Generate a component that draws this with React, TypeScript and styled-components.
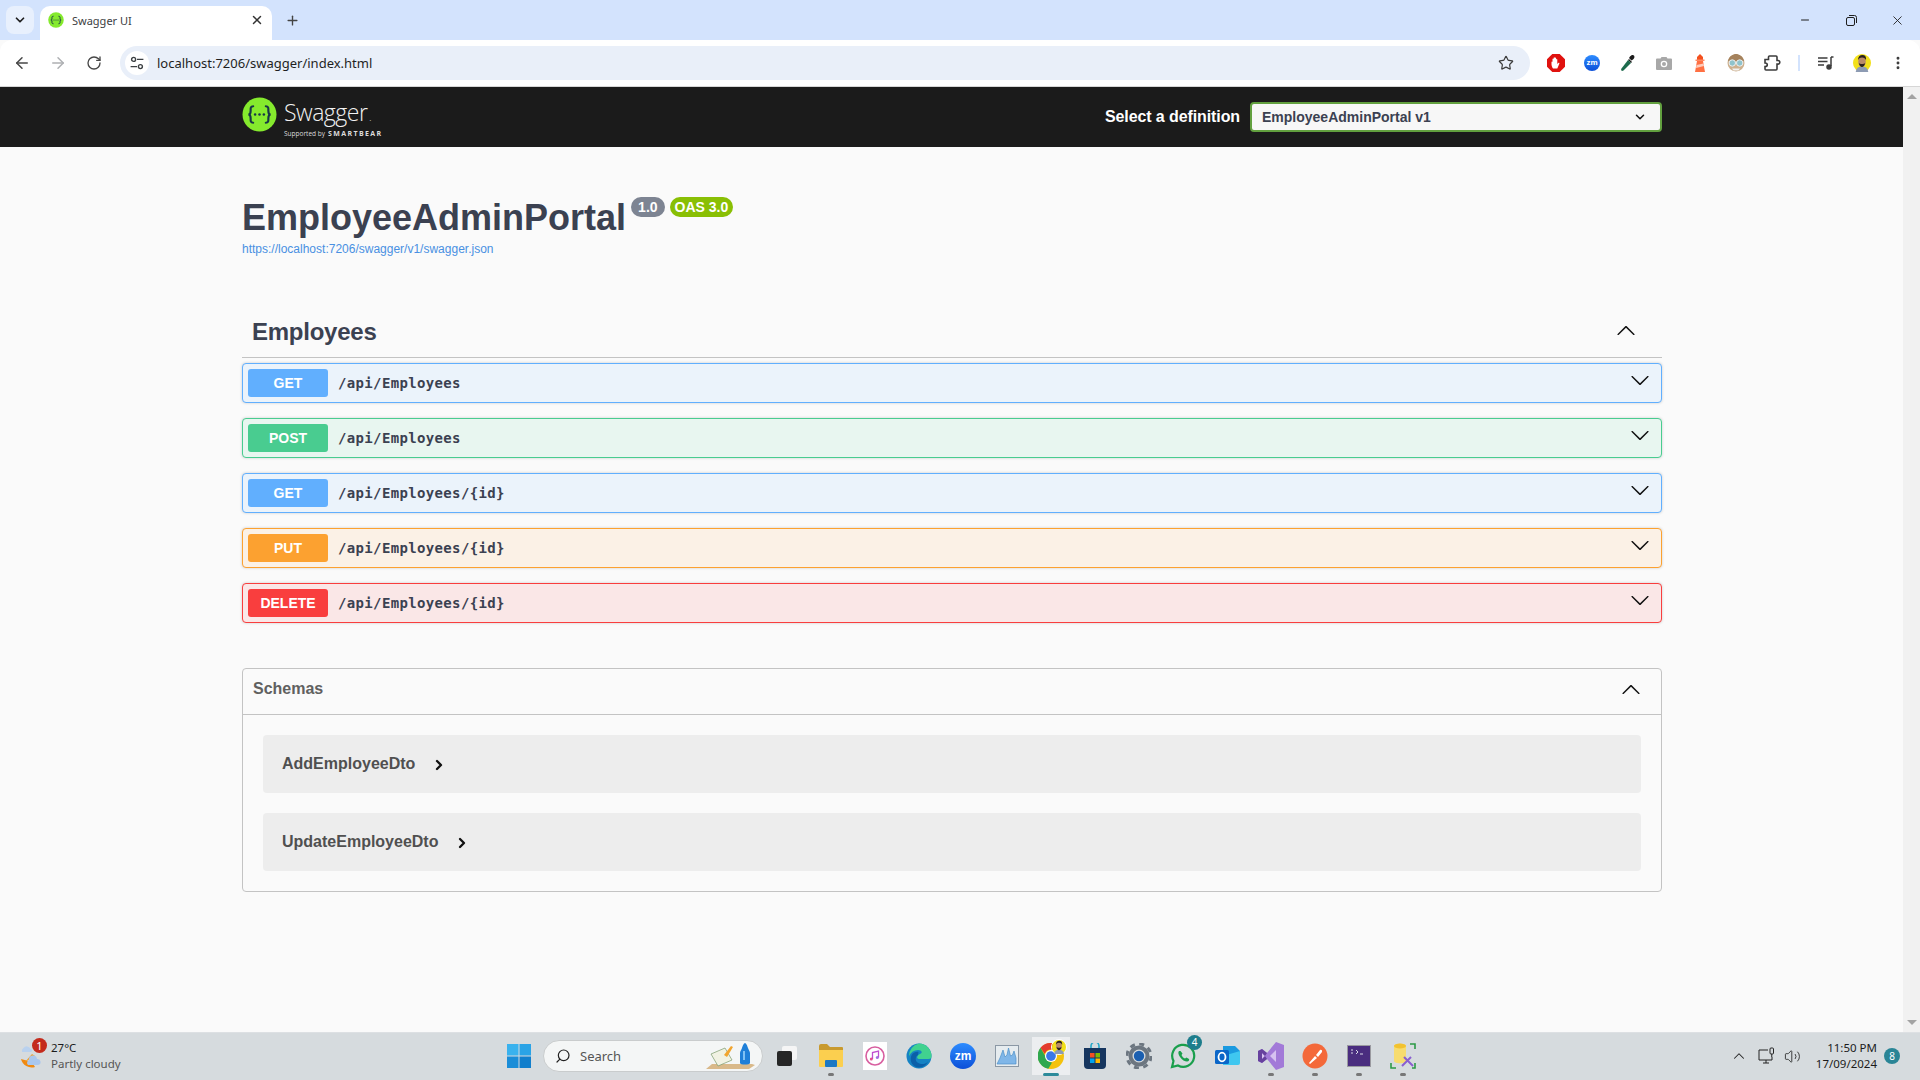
import React from "react";
import styled, { createGlobalStyle } from "styled-components";
import { ArrowLeft, ArrowRight, RotateCw, Star, X, Plus, ChevronDown, ChevronRight, ChevronUp, Minus, EllipsisVertical, Search as SearchIcon, Volume2 } from "lucide-react";

const Global = createGlobalStyle`
  html, body { margin: 0; padding: 0; width: 100%; height: 100%; overflow: hidden; }
  #root { width: 1920px; height: 1080px; }
  * { box-sizing: border-box; }
`;

const Screen = styled.div`
  width: 1920px; height: 1080px; display: flex; flex-direction: column; overflow: hidden;
  font-family: "Liberation Sans", Arial, sans-serif; background: #fafafa;
`;

/* ---------- browser chrome ---------- */
const TabStrip = styled.div`
  height: 40px; background: #d3e3fd; display: flex; align-items: flex-end; padding-left: 6px; flex: none;
`;
const TabMenu = styled.div`
  width: 28px; height: 28px; margin-bottom: 6px; border-radius: 8px; background: #e8f0fd;
  display: flex; align-items: center; justify-content: center; color: #1f1f1f;
`;
const Tab = styled.div`
  width: 232px; height: 34px; margin-left: 6px; background: #fff; border-radius: 10px 10px 0 0;
  display: flex; align-items: center; padding: 0 8px; gap: 8px; padding-bottom: 6px;
`;
const TabTitle = styled.span`
  flex: 1; font: 11px "Noto Sans", sans-serif; color: #3c4043;
`;
const NewTab = styled.div`
  width: 40px; height: 40px; display: flex; align-items: center; justify-content: center; color: #444;
`;
const WindowControls = styled.div`
  margin-left: auto; height: 40px; display: flex; color: #1f1f1f;
`;
const WindowButton = styled.div`
  width: 46px; height: 40px; display: flex; align-items: center; justify-content: center;
`;
const Toolbar = styled.div`
  height: 47px; flex: none; background: #fff; border-bottom: 1px solid #d6d6d6; display: flex; align-items: center; padding-left: 4px;
  border-radius: 12px 12px 0 0;
`;
const NavButton = styled.div<{ $dim?: boolean }>`
  width: 36px; height: 36px; display: flex; align-items: center; justify-content: center;
  color: ${(p) => (p.$dim ? "#aeb0b3" : "#474747")};
`;
const AddressBar = styled.div`
  width: 1410px; height: 34px; margin-left: 8px; background: #e9eff9; border-radius: 17px;
  display: flex; align-items: center; padding: 0 6px 0 5px;
`;
const SiteInfo = styled.div`
  width: 24px; height: 24px; border-radius: 50%; background: #fff; display: flex; align-items: center; justify-content: center; flex: none;
`;
const UrlText = styled.span`
  flex: 1; margin-left: 8px; font: 13px "Noto Sans", sans-serif; color: #1f1f1f;
`;
const ExtensionRow = styled.div`
  display: flex; align-items: center; margin-left: 8px; height: 36px;
`;
const ExtensionCell = styled.div<{ $w?: number }>`
  width: ${(p) => p.$w ?? 36}px; height: 36px; display: flex; align-items: center; justify-content: center; flex: none;
`;
const ToolbarDivider = styled.div`
  width: 2px; height: 16px; background: #d3e3fd; margin: 0 16px 0 8px;
`;

/* ---------- page ---------- */
const Viewport = styled.div`
  flex: 1; min-height: 0; display: flex;
`;
const Page = styled.div`
  flex: 1; min-width: 0; background: #fafafa; display: flex; flex-direction: column;
`;
const Scrollbar = styled.div`
  width: 17px; background: #f1f1f1; display: flex; flex-direction: column; justify-content: space-between; align-items: center; padding: 7px 0;
`;
const ScrollArrow = styled.div<{ $down?: boolean }>`
  width: 0; height: 0; border-left: 5px solid transparent; border-right: 5px solid transparent;
  ${(p) => (p.$down ? "border-top: 5px solid #a3a3a3;" : "border-bottom: 5px solid #a3a3a3;")}
`;
const TopBar = styled.div`
  height: 60px; flex: none; background: #1b1b1b; display: flex; align-items: center; padding: 0 241px 0 242px;
`;
const Logo = styled.div`
  display: flex; align-items: flex-start; gap: 7px; color: #fff; height: 35px; margin-top: -5px;
`;
const LogoWords = styled.div`
  display: flex; flex-direction: column; margin-top: 2px;
`;
const LogoName = styled.span`
  font: 300 23px/26px "Open Sans", sans-serif; letter-spacing: -0.5px; color: #f2f2f2;
`;
const LogoDot = styled.span`
  font-size: 9px; letter-spacing: 0; margin-left: 2px;
`;
const LogoSub = styled.span`
  margin-top: -1px; font: 6.5px/8px "Open Sans", sans-serif; color: #ddd; white-space: nowrap;
`;
const LogoBrand = styled.b`
  font: 700 7px/8px "Open Sans", sans-serif; letter-spacing: 1.4px; margin-left: 3px;
`;
const DefinitionForm = styled.div`
  margin-left: auto; display: flex; align-items: center; gap: 10px;
`;
const DefinitionLabel = styled.span`
  font: 700 16px "Liberation Sans", sans-serif; color: #fff; margin-top: -1px; letter-spacing: -0.1px;
`;
const DefinitionSelect = styled.div`
  width: 412px; height: 30px; border: 2px solid #62a03f; border-radius: 4px; background: #f7f7f7;
  display: flex; align-items: center; justify-content: space-between; padding: 0 13px 0 10px;
  font: 700 14px "Liberation Sans", sans-serif; color: #3b4151;
`;
const Wrapper = styled.div`
  width: 1420px; margin-left: 242px; display: flex; flex-direction: column;
`;
const Info = styled.div`
  margin-top: 50px; height: 90px; display: flex; flex-direction: column;
`;
const TitleRow = styled.div`
  display: flex; align-items: flex-start; height: 41px;
`;
const Title = styled.h2`
  margin: 0; font: 700 36px/41px "Liberation Sans", sans-serif; color: #3b4151;
`;
const Pill = styled.span<{ $bg: string; $px: number }>`
  height: 20px; margin-left: 5px; padding: 0 ${(p) => p.$px}px; border-radius: 10px; background: ${(p) => p.$bg};
  color: #fff; font: 700 14px/20px "Liberation Sans", sans-serif;
`;
const SpecLink = styled.a`
  margin-top: 4px; font: 12px/14px "Liberation Sans", sans-serif; color: #4990e2;
`;
const SectionHead = styled.div`
  height: 51px; margin-top: 20px; border-bottom: 1px solid #c3c3c3; display: flex; align-items: center; justify-content: space-between; padding: 0 26px 0 10px;
`;
const SectionTitle = styled.h3`
  margin: 0; font: 700 24px "Liberation Sans", sans-serif; color: #3b4151; letter-spacing: -0.25px;
`;
const Ops = styled.div`
  display: flex; flex-direction: column; gap: 15px; margin-top: 5px;
`;
const Op = styled.div<{ $c: string; $bg: string }>`
  height: 40px; border: 1px solid ${(p) => p.$c}; background: ${(p) => p.$bg}; border-radius: 4px;
  box-shadow: 0 0 3px rgba(0, 0, 0, 0.19); display: flex; align-items: center; padding: 0 11px 0 5px;
`;
const Method = styled.span<{ $c: string }>`
  width: 80px; height: 28px; background: ${(p) => p.$c}; border-radius: 3px; color: #fff; text-align: center;
  font: 700 14px/28px "Liberation Sans", sans-serif; flex: none;
`;
const OpPath = styled.span`
  flex: 1; margin-left: 10px; font: 600 14px "DejaVu Sans Mono", monospace; color: #3b4151; letter-spacing: 0.35px;
`;
const ArrowSvg = styled.svg<{ $up?: boolean; $shift: number }>`
  width: 20px; height: 20px; flex: none; fill: #111; margin-top: ${(p) => p.$shift}px;
  ${(p) => p.$up && "transform: rotate(180deg);"}
`;
const SchemaBox = styled.section`
  margin-top: 45px; height: 224px; border: 1px solid #c3c3c3; border-radius: 4px; display: flex; flex-direction: column;
`;
const SchemaHead = styled.div`
  height: 46px; flex: none; border-bottom: 1px solid #c3c3c3; display: flex; align-items: center; justify-content: space-between;
  padding: 0 20px 0 10px;
`;
const SchemaTitle = styled.span`
  font: 700 16px "Liberation Sans", sans-serif; color: #606060; margin-top: -5px;
`;
const SchemaList = styled.div`
  padding: 20px; display: flex; flex-direction: column; gap: 20px;
`;
const Model = styled.div`
  height: 58px; background: #ededed; border-radius: 4px; display: flex; align-items: center; padding-left: 19px; gap: 16px;
  color: #111;
`;
const ModelName = styled.span`
  font: 700 16px "Liberation Sans", sans-serif; color: #505050; margin-top: -1px;
`;
const ModelCaret = styled(ChevronRight)`
  margin-top: 2px;
`;

/* ---------- taskbar ---------- */
const Taskbar = styled.div`
  height: 48px; flex: none; background: #d6dbde; border-top: 1px solid #dde0e3; padding-bottom: 1px; display: flex; align-items: center;
`;
const Weather = styled.div`
  width: 497px; flex: none; display: flex; align-items: center; padding-left: 20px; gap: 7px; position: relative;
`;
const WeatherBadge = styled.span`
  position: absolute; left: 32px; top: -2px; width: 15px; height: 15px; border-radius: 50%; background: #c42b1c; color: #fff;
  font: 11px/15px "Noto Sans", sans-serif; text-align: center;
`;
const WeatherText = styled.div`
  display: flex; flex-direction: column; font: 11.5px/16px "Noto Sans", sans-serif; color: #1b1b1b;
`;
const WeatherSub = styled.span`
  color: #555;
`;
const Cell = styled.div<{ $active?: boolean }>`
  width: 44px; height: 44px; flex: none; display: flex; align-items: center; justify-content: center; position: relative;
  ${(p) => p.$active && "background: linear-gradient(#eceef0, #eceef0) center / 38px 38px no-repeat;"}
`;
const RunDot = styled.span<{ $active?: boolean }>`
  position: absolute; bottom: 2px; left: 50%; transform: translateX(-50%); height: 3px; border-radius: 2px;
  width: ${(p) => (p.$active ? 16 : 6)}px; background: ${(p) => (p.$active ? "#2c8a9a" : "#777")};
`;
const SearchBox = styled.div`
  width: 220px; height: 32px; margin: 0 2px; background: #f4f6f6; border: 1px solid #c9cccd; border-radius: 16px; display: flex; align-items: center; padding-left: 11px; gap: 9px;
  font: 13px "Noto Sans", sans-serif; color: #555; flex: none;
`;
const SearchArt = styled.div`
  margin-left: auto; margin-right: 7px; display: flex;
`;
const Tray = styled.div`
  margin-left: auto; display: flex; align-items: center; padding-right: 20px; color: #222;
`;
const TrayIcon = styled.div<{ $w: number }>`
  width: ${(p) => p.$w}px; display: flex; justify-content: center;
`;
const Clock = styled.div`
  margin-left: 12px; display: flex; flex-direction: column; align-items: flex-end; font: 11.5px/16px "Noto Sans", sans-serif; color: #1b1b1b;
`;
const NotifyBadge = styled.span`
  margin-left: 7px; width: 16px; height: 16px; border-radius: 50%; background: #2a8596; color: #fff; font: 10px/16px "Noto Sans", sans-serif; text-align: center;
`;
const CountBadge = styled.span`
  position: absolute; top: 1px; right: 3px; width: 15px; height: 15px; border-radius: 50%; background: #1d7d8c; color: #fff;
  font: 10px/15px "Noto Sans", sans-serif; text-align: center;
`;
const AvatarBadge = styled.span`
  position: absolute; top: 5px; right: 6px; display: flex; border-radius: 50%; border: 1px solid #fff;
`;
const ZmDisc = styled.span<{ $size: number; $fs: number }>`
  width: ${(p) => p.$size}px; height: ${(p) => p.$size}px; border-radius: 50%; background: linear-gradient(#2d8cff, #0b4fd8);
  color: #fff; text-align: center; font: 700 ${(p) => p.$fs}px/${(p) => p.$size}px "Liberation Sans", sans-serif; display: block;
`;

/* ---------- drawings ---------- */
const Arrow = ({ up, shift }: { up?: boolean; shift: number }) => (
  <ArrowSvg viewBox="0 0 20 20" $up={up} $shift={shift}>
    <path d="M17.418 6.109c.272-.268.709-.268.979 0s.271.701 0 .969l-7.908 7.83c-.27.268-.707.268-.979 0l-7.908-7.83c-.27-.268-.27-.701 0-.969.271-.268.709-.268.979 0L10 13.25l7.418-7.141z" />
  </ArrowSvg>
);
const SwaggerMark = ({ size }: { size: number }) => (
  <svg width={size} height={size} viewBox="0 0 36 36">
    <circle cx="18" cy="18" r="17.5" fill="#85ea2d" />
    <g fill="none" stroke="#173647" strokeWidth="2.2" strokeLinecap="round">
      <path d="M11.5 9.5c-3 0-2.6 2.2-2.6 4.6 0 2.4-.6 3.9-2.4 3.9 1.8 0 2.4 1.5 2.4 3.9s-.4 4.6 2.6 4.6" />
      <path d="M24.5 9.5c3 0 2.6 2.2 2.6 4.6 0 2.4.6 3.9 2.4 3.9-1.8 0-2.4 1.5-2.4 3.9s.4 4.6-2.6 4.6" />
    </g>
    <g fill="#173647"><circle cx="13.5" cy="18" r="1.3" /><circle cx="18" cy="18" r="1.3" /><circle cx="22.5" cy="18" r="1.3" /></g>
  </svg>
);
const Tune = () => (
  <svg width="14" height="14" viewBox="0 0 14 14" fill="none" stroke="#3c4043" strokeWidth="1.4">
    <circle cx="3.6" cy="3.4" r="2" /><path d="M7 3.4h6.4M0.6 10.6h6.4" /><circle cx="10.4" cy="10.6" r="2" />
  </svg>
);
const Avatar = ({ size }: { size: number }) => (
  <svg width={size} height={size} viewBox="0 0 20 20">
    <circle cx="10" cy="10" r="10" fill="#f2e01a" />
    <path d="M3 20c.5-4 3-6 7-6s6.500 2 7 6z" fill="#8d9bb3" />
    <ellipse cx="10" cy="8.500" rx="4.200" ry="5.500" fill="#b98a68" />
    <path d="M5.500 7c0-4 2-6 5-6s4.500 2 4 6c-1-2-2-3-4.500-3S6.500 5 5.500 7z" fill="#2a211c" />
    <path d="M6.500 10c.5 3 2 4.500 3.500 4.500s3-1.500 3.500-4.500c-1 1.500-6 1.500-7 0z" fill="#2a211c" />
  </svg>
);
const ChromeMark = () => (
  <svg width="26" height="26" viewBox="0 0 24 24">
    <circle cx="12" cy="12" r="12" fill="#f4c20d" />
    <path d="M12 0a12 12 0 0 1 10.400 6H12a6 6 0 0 0-5.700 4.100L2.300 4.400A12 12 0 0 1 12 0z" fill="#e33b2e" />
    <path d="M2.300 4.400l5.300 9.300a5 5 0 0 0 5.400 4.200L9.500 23.800A12 12 0 0 1 2.300 4.400z" fill="#2fa84f" />
    <circle cx="12" cy="12" r="5.600" fill="#fff" /><circle cx="12" cy="12" r="4.500" fill="#3b78e7" />
  </svg>
);
const Icon = {
  Stop: () => (
    <svg width="18" height="18" viewBox="0 0 18 18">
      <path d="M5.300 0h7.400L18 5.300v7.400L12.700 18H5.300L0 12.700V5.300z" fill="#e0120f" />
      <path d="M6 14.500c-1-1.500-1.500-3-1.500-4V8c0-.8 1-.8 1 0V5c0-.8 1.200-.8 1.200 0V3.800c0-.8 1.200-.8 1.200 0V4c0-.8 1.200-.8 1.200 0v1.500c0-.8 1.200-.8 1.200 0V10l1-1c.6-.6 1.400 0 1 .7l-2 4.800z" fill="#fff" />
    </svg>
  ),
  Dropper: () => (
    <svg width="18" height="18" viewBox="0 0 18 18">
      <path d="M11 2.500c1.200-1.800 3.200-2 4-1s.6 2.800-1 4l-1.500 1-2.500-2.500z" fill="#1c1c1c" />
      <path d="M10 5l3 3-1 1-3-3z" fill="#1c1c1c" />
      <path d="M9 6l3 3-7.500 7.500-1.500.5-1-1 .5-1.500z" fill="#1d6b4d" />
    </svg>
  ),
  Camera: () => (
    <svg width="16" height="14" viewBox="0 0 16 14">
      <path d="M1 2.500h3.500L5.500 1h5l1 1.500H15a1 1 0 0 1 1 1V13a1 1 0 0 1-1 1H1a1 1 0 0 1-1-1V3.500a1 1 0 0 1 1-1z" fill="#a8a8a8" />
      <circle cx="8" cy="8" r="3.300" fill="#fff" /><circle cx="8" cy="8" r="2" fill="#a8a8a8" />
    </svg>
  ),
  Lighthouse: () => (
    <svg width="14" height="18" viewBox="0 0 14 18">
      <path d="M7 0l3 3v3H4V3z" fill="#f4511e" /><rect x="2.500" y="5.500" width="9" height="1.500" fill="#ff8a65" />
      <path d="M4 7h6l2 11H2z" fill="#ff7043" /><path d="M3.500 11l7-1.500.5 2.500-8 2z" fill="#ffccbc" />
    </svg>
  ),
  Goggles: () => (
    <svg width="18" height="18" viewBox="0 0 18 18">
      <circle cx="9" cy="9" r="8.500" fill="#cdb08e" /><path d="M1 7c1-5 5-7 8-7s7 2 8 7z" fill="#a5825c" />
      <circle cx="5.300" cy="9" r="3.200" fill="#8fc3cc" stroke="#eee" /><circle cx="12.700" cy="9" r="3.200" fill="#8fc3cc" stroke="#eee" />
      <path d="M5 14.500h8l-1.500 2h-5z" fill="#f1f1f1" />
    </svg>
  ),
  Puzzle: () => (
    <svg width="18" height="18" viewBox="0 0 18 18" fill="none" stroke="#3c3c3c" strokeWidth="1.600">
      <path d="M2 5.500h3.500V3c0-.8.500-1 1-1h6.500a1 1 0 0 1 1 1v3.500h1a1.700 1.700 0 0 1 0 3.600h-1V15a1 1 0 0 1-1 1H3a1 1 0 0 1-1-1v-2.500c1.500 0 2.300-.8 2.300-1.800S3.500 9 2 9z" />
    </svg>
  ),
  Media: () => (
    <svg width="16" height="16" viewBox="0 0 16 16" fill="none" stroke="#3c3c3c" strokeWidth="1.500">
      <path d="M0 3h9.500M0 6.500h9.500M0 10h6" /><path d="M13 2v9" /><path d="M13 2h2.500" /><circle cx="11" cy="12" r="2" fill="#3c3c3c" />
    </svg>
  ),
  Restore: () => (
    <svg width="11" height="11" viewBox="0 0 11 11" fill="none" stroke="#1f1f1f">
      <rect x="0.500" y="2.500" width="8" height="8" rx="1.500" /><path d="M3 .5h5.500a2 2 0 0 1 2 2V8" />
    </svg>
  ),
  Weather: () => (
    <svg width="24" height="26" viewBox="0 0 24 26">
      <path d="M2 9a3.500 3.500 0 0 1 1.500-4 4 4 0 0 1 7 1c2 0 2 3 0 3z" fill="#b9d1ee" />
      <path d="M1 16a11 11 0 0 0 14 8l-3-5z" fill="#f08a12" /><path d="M5 19l7-8 3 2z" fill="#f0a030" />
      <path d="M8 22a3 3 0 0 1 1-5 4 4 0 0 1 8-1 3 3 0 0 1 1 6z" fill="#a9c7ee" />
    </svg>
  ),
  Start: () => (
    <svg width="24" height="24" viewBox="0 0 24 24">
      <rect x="0" y="0" width="11.500" height="11.500" fill="#39b2ee" /><rect x="12.500" y="0" width="11.500" height="11.500" fill="#2aa3e6" />
      <rect x="0" y="12.500" width="11.500" height="11.500" fill="#1a8dd8" /><rect x="12.500" y="12.500" width="11.500" height="11.500" fill="#127fcc" />
    </svg>
  ),
  Book: () => (
    <svg width="49" height="26" viewBox="0 0 49 26">
      <path d="M6 21h40l3 1-6 4H0z" fill="#d9b98a" />
      <path d="M5 11l14-6 7 12-14 6z" fill="#f1f2e3" stroke="#7a9a6a" strokeWidth=".7" />
      <path d="M18 12l7-9 2 1-6 10z" fill="#f2a52e" />
      <path d="M34 10c0-2 1.500-3 2-5s2-5 3-5 2.500 3 3 5 2 3 2 5v10c0 2-10 2-10 0z" fill="#1f7fd8" />
      <path d="M37 8h2v9h-2z" fill="#7fc1f4" />
    </svg>
  ),
  TaskView: () => (
    <svg width="22" height="22" viewBox="0 0 22 22">
      <rect x="6" y="1" width="15" height="14" rx="2" fill="#f5f5f5" /><rect x="1" y="6" width="15" height="15" rx="2" fill="#262626" />
    </svg>
  ),
  Folder: () => (
    <svg width="26" height="26" viewBox="0 0 26 26">
      <path d="M1 3a2 2 0 0 1 2-2h6l3 3h12a1 1 0 0 1 1 1v3H1z" fill="#c99a2e" />
      <path d="M1 7h24v16a1 1 0 0 1-1 1H2a1 1 0 0 1-1-1z" fill="#fbcf4f" /><rect x="7" y="17" width="12" height="7" rx="1" fill="#1c78c4" />
    </svg>
  ),
  ITunes: () => (
    <svg width="24" height="28" viewBox="0 0 24 28">
      <rect width="24" height="28" fill="#fff" /><circle cx="12" cy="14" r="9" fill="none" stroke="#d85fa0" strokeWidth="1.600" />
      <path d="M9.500 17V10.500l6-1.500v6.500" fill="none" stroke="#c04fd0" strokeWidth="1.300" /><circle cx="8.300" cy="17" r="1.500" fill="#e0508f" /><circle cx="14.300" cy="15.500" r="1.500" fill="#a070e0" />
    </svg>
  ),
  Edge: () => (
    <svg width="26" height="26" viewBox="0 0 26 26">
      <circle cx="13" cy="13" r="12.500" fill="#1583c4" />
      <path d="M13 .5A12.500 12.500 0 0 1 25.500 13c0 2-.5 3-3 3H13c-3 0-2-4 1-5 3-1 2-4-2-4-4 0-7 2-9 6A12.500 12.500 0 0 1 13 .5z" fill="#41d28f" />
      <path d="M12 12c-3 1-4 8 3 9 3 .3 5-.500 7-2.500-3 6-9 7-13 5-5-3-5-9-3-12 1.500-2 4-3 6.500-2.500z" fill="#0b5fa8" />
    </svg>
  ),
  Monitor: () => (
    <svg width="24" height="22" viewBox="0 0 24 22">
      <rect x=".5" y=".5" width="23" height="21" fill="#e6ecef" stroke="#8b98a5" />
      <path d="M2 19l3-6 3-8 2 7 2-2 1.500-7 2 8 2-1 1.500-4 2 7v6z" fill="#7fb6e8" stroke="#4d90c8" strokeWidth=".7" />
    </svg>
  ),
  Store: () => (
    <svg width="24" height="26" viewBox="0 0 24 26">
      <path d="M8 5V3a4 4 0 0 1 8 0v2" fill="none" stroke="#28a9c9" strokeWidth="1.600" />
      <path d="M1 5h22v17a4 4 0 0 1-4 4H5a4 4 0 0 1-4-4z" fill="#16365f" />
      <rect x="7" y="10" width="4.500" height="4.500" fill="#f25022" /><rect x="12.500" y="10" width="4.500" height="4.500" fill="#7fba00" />
      <rect x="7" y="15.500" width="4.500" height="4.500" fill="#00a4ef" /><rect x="12.500" y="15.500" width="4.500" height="4.500" fill="#ffb900" />
    </svg>
  ),
  Gear: () => (
    <svg width="26" height="26" viewBox="0 0 26 26">
      <circle cx="13" cy="13" r="8.500" fill="none" stroke="#6c7680" strokeWidth="4" />
      <circle cx="13" cy="13" r="12" fill="none" stroke="#6c7680" strokeWidth="3" strokeDasharray="5 4.400" />
      <circle cx="13" cy="13" r="5.200" fill="#1b5fb0" />
    </svg>
  ),
  WhatsApp: () => (
    <svg width="26" height="26" viewBox="0 0 26 26">
      <path d="M2 24l1.500-6A11 11 0 1 1 8 22.500z" fill="none" stroke="#1a9f4c" strokeWidth="2.200" />
      <path d="M9 8c-1 1-1 3 1 6s5 4.500 7 4.500 2.500-2 2-2.500l-2.500-1.500-1.500 1c-1.500-.5-3-2-3.500-3.500l1-1.500L10.500 8z" fill="#1a9f4c" />
    </svg>
  ),
  Outlook: () => (
    <svg width="26" height="26" viewBox="0 0 26 26">
      <path d="M9 3h12l5 5v12H9z" fill="#1a9ae0" /><path d="M9 13l17-5v12a2 2 0 0 1-2 2H9z" fill="#3fc7f0" />
      <rect x="1" y="7" width="14" height="14" rx="1.500" fill="#0a66c8" /><ellipse cx="8" cy="14" rx="3.500" ry="4.300" fill="none" stroke="#fff" strokeWidth="1.800" />
    </svg>
  ),
  VS: () => (
    <svg width="26" height="28" viewBox="0 0 26 28">
      <path d="M18 0l8 3v22l-8 3-9-11-5 4-4-2V9l4-2 5 4z" fill="#a27ad8" /><path d="M18 8l-6 6 6 6z" fill="#d6c2f0" /><path d="M4 11v6l3-3z" fill="#d6c2f0" />
      <path d="M0 9l4-2 5 4-2 3-3-3v6l3-3 2 3-5 4-4-2z" fill="#66419e" />
    </svg>
  ),
  Postman: () => (
    <svg width="26" height="26" viewBox="0 0 26 26">
      <circle cx="13" cy="13" r="12.500" fill="#f4693a" />
      <path d="M7 20l6-7 2 2-7 6zM14 12l4-5c1.500-.5 2.500.5 2 2l-4 5z" fill="#fff" />
    </svg>
  ),
  Terminal: () => (
    <svg width="24" height="22" viewBox="0 0 24 22">
      <rect x=".5" y=".5" width="23" height="21" fill="#4a2d7f" stroke="#9a9aa0" />
      <path d="M4 5h2M4 8h2M9 5l2 2-2 2M13 9h3" stroke="#d8d8e6" strokeWidth="1" fill="none" />
    </svg>
  ),
  DbTools: () => (
    <svg width="26" height="26" viewBox="0 0 26 26">
      <path d="M4 3c0-3 12-3 12 0v15c0 3-12 3-12 0z" fill="#f7dc6f" /><ellipse cx="10" cy="3" rx="6" ry="2.500" fill="#f2c230" />
      <path d="M12 23l9-9M14 14l9 9" stroke="#8a5fd0" strokeWidth="2" /><path d="M1 20v5h5M20 1h5v5M25 20v5h-3" fill="none" stroke="#2c9a46" strokeWidth="1.600" />
    </svg>
  ),
  Network: () => (
    <svg width="18" height="18" viewBox="0 0 18 18" fill="none" stroke="#222" strokeWidth="1">
      <path d="M10 3H1v10h13v-3" /><path d="M5 16h6M8 13v3" /><rect x="12" y="1" width="3.500" height="6" rx="1" /><path d="M13.750 7v3" />
    </svg>
  ),
};

const operations = [
  { m: "GET", path: "/api/Employees", c: "#61affe", bg: "#ebf3fb" },
  { m: "POST", path: "/api/Employees", c: "#49cc90", bg: "#e8f6f0" },
  { m: "GET", path: "/api/Employees/{id}", c: "#61affe", bg: "#ebf3fb" },
  { m: "PUT", path: "/api/Employees/{id}", c: "#fca130", bg: "#fbf1e6" },
  { m: "DELETE", path: "/api/Employees/{id}", c: "#f93e3e", bg: "#fae7e7" },
];
const models = ["AddEmployeeDto", "UpdateEmployeeDto"];

const apps: { node: React.ReactNode; dot?: boolean; active?: boolean; badge?: string }[] = [
  { node: <Icon.TaskView /> },
  { node: <Icon.Folder />, dot: true },
  { node: <Icon.ITunes /> },
  { node: <Icon.Edge /> },
  { node: <ZmDisc $size={26} $fs={12}>zm</ZmDisc> },
  { node: <Icon.Monitor /> },
  { node: <ChromeMark />, dot: true, active: true },
  { node: <Icon.Store /> },
  { node: <Icon.Gear /> },
  { node: <Icon.WhatsApp />, badge: "4" },
  { node: <Icon.Outlook /> },
  { node: <Icon.VS />, dot: true },
  { node: <Icon.Postman />, dot: true },
  { node: <Icon.Terminal />, dot: true },
  { node: <Icon.DbTools />, dot: true },
];

export default function App() {
  return (
    <Screen>
      <Global />
      <TabStrip>
        <TabMenu><ChevronDown size={14} strokeWidth={3} /></TabMenu>
        <Tab>
          <SwaggerMark size={16} />
          <TabTitle>Swagger UI</TabTitle>
          <X size={14} strokeWidth={2.5} color="#333" />
        </Tab>
        <NewTab><Plus size={15} strokeWidth={2.2} /></NewTab>
        <WindowControls>
          <WindowButton><Minus size={12} strokeWidth={2} /></WindowButton>
          <WindowButton><Icon.Restore /></WindowButton>
          <WindowButton><X size={15} strokeWidth={1.4} /></WindowButton>
        </WindowControls>
      </TabStrip>
      <Toolbar>
        <NavButton><ArrowLeft size={18} strokeWidth={2} /></NavButton>
        <NavButton $dim><ArrowRight size={18} strokeWidth={2} /></NavButton>
        <NavButton><RotateCw size={16} strokeWidth={2} /></NavButton>
        <AddressBar>
          <SiteInfo><Tune /></SiteInfo>
          <UrlText>localhost:7206/swagger/index.html</UrlText>
          <ExtensionCell $w={36}><Star size={16} strokeWidth={1.8} color="#3c3c3c" /></ExtensionCell>
        </AddressBar>
        <ExtensionRow>
          <ExtensionCell><Icon.Stop /></ExtensionCell>
          <ExtensionCell><ZmDisc $size={16} $fs={8}>zm</ZmDisc></ExtensionCell>
          <ExtensionCell><Icon.Dropper /></ExtensionCell>
          <ExtensionCell><Icon.Camera /></ExtensionCell>
          <ExtensionCell><Icon.Lighthouse /></ExtensionCell>
          <ExtensionCell><Icon.Goggles /></ExtensionCell>
          <ExtensionCell><Icon.Puzzle /></ExtensionCell>
          <ToolbarDivider />
          <ExtensionCell $w={20}><Icon.Media /></ExtensionCell>
          <ExtensionCell $w={52}><Avatar size={18} /></ExtensionCell>
          <ExtensionCell $w={20}><EllipsisVertical size={16} strokeWidth={2.4} color="#3c3c3c" /></ExtensionCell>
        </ExtensionRow>
      </Toolbar>
      <Viewport>
        <Page>
          <TopBar>
            <Logo>
              <SwaggerMark size={35} />
              <LogoWords>
                <LogoName>Swagger<LogoDot>.</LogoDot></LogoName>
                <LogoSub>Supported by<LogoBrand>SMARTBEAR</LogoBrand></LogoSub>
              </LogoWords>
            </Logo>
            <DefinitionForm>
              <DefinitionLabel>Select a definition</DefinitionLabel>
              <DefinitionSelect>
                EmployeeAdminPortal v1
                <ChevronDown size={14} strokeWidth={2.6} color="#111" />
              </DefinitionSelect>
            </DefinitionForm>
          </TopBar>
          <Wrapper>
            <Info>
              <TitleRow>
                <Title>EmployeeAdminPortal</Title>
                <Pill $bg="#7d8492" $px={7}>1.0</Pill>
                <Pill $bg="#89bf04" $px={5}>OAS 3.0</Pill>
              </TitleRow>
              <SpecLink>https://localhost:7206/swagger/v1/swagger.json</SpecLink>
            </Info>
            <SectionHead>
              <SectionTitle>Employees</SectionTitle>
              <Arrow up shift={-2} />
            </SectionHead>
            <Ops>
              {operations.map((o, i) => (
                <Op key={i} $c={o.c} $bg={o.bg}>
                  <Method $c={o.c}>{o.m}</Method>
                  <OpPath>{o.path}</OpPath>
                  <Arrow shift={-6} />
                </Op>
              ))}
            </Ops>
            <SchemaBox>
              <SchemaHead>
                <SchemaTitle>Schemas</SchemaTitle>
                <Arrow up shift={-3} />
              </SchemaHead>
              <SchemaList>
                {models.map((m) => (
                  <Model key={m}>
                    <ModelName>{m}</ModelName>
                    <ModelCaret size={16} strokeWidth={3.5} />
                  </Model>
                ))}
              </SchemaList>
            </SchemaBox>
          </Wrapper>
        </Page>
        <Scrollbar>
          <ScrollArrow />
          <ScrollArrow $down />
        </Scrollbar>
      </Viewport>
      <Taskbar>
        <Weather>
          <Icon.Weather />
          <WeatherBadge>1</WeatherBadge>
          <WeatherText>
            <span>27°C</span>
            <WeatherSub>Partly cloudy</WeatherSub>
          </WeatherText>
        </Weather>
        <Cell><Icon.Start /></Cell>
        <SearchBox>
          <SearchIcon size={16} strokeWidth={1.8} color="#222" style={{ transform: "scaleX(-1)" }} />
          Search
          <SearchArt><Icon.Book /></SearchArt>
        </SearchBox>
        {apps.map((a, i) => (
          <Cell key={i} $active={a.active}>
            {a.node}
            {a.active && <AvatarBadge><Avatar size={14} /></AvatarBadge>}
            {a.badge && <CountBadge>{a.badge}</CountBadge>}
            {a.dot && <RunDot $active={a.active} />}
          </Cell>
        ))}
        <Tray>
          <TrayIcon $w={29}><ChevronUp size={18} strokeWidth={1.4} /></TrayIcon>
          <TrayIcon $w={27}><Icon.Network /></TrayIcon>
          <TrayIcon $w={23}><Volume2 size={17} strokeWidth={1.2} /></TrayIcon>
          <Clock>
            <span>11:50 PM</span>
            <span>17/09/2024</span>
          </Clock>
          <NotifyBadge>8</NotifyBadge>
        </Tray>
      </Taskbar>
    </Screen>
  );
}
